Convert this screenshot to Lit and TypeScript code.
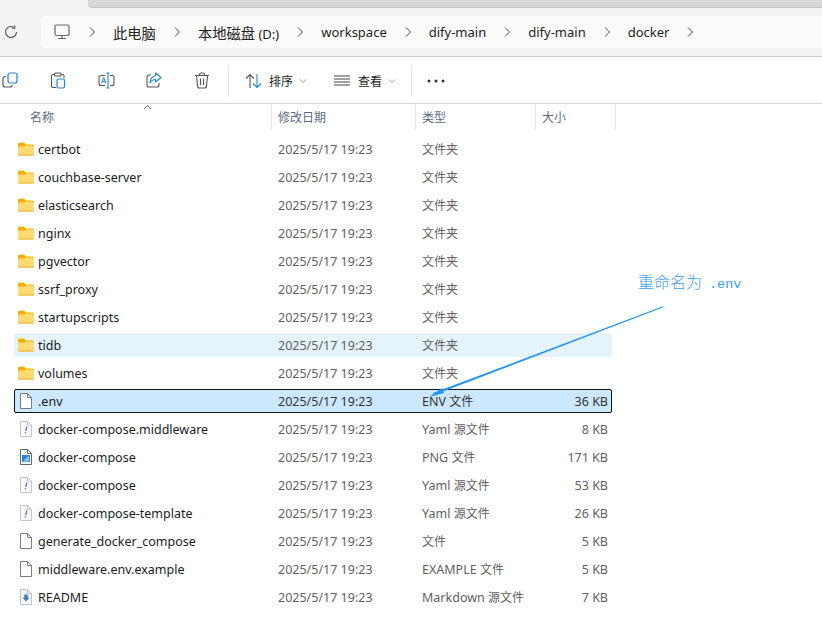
import { LitElement, html, css, svg } from "lit";
import { customElement } from "lit/decorators.js";

type Kind = "folder" | "file" | "yaml" | "png" | "md";
interface Row { name: string; date: string; type: string; size: string; kind: Kind; state?: string; }
const D = "2025/5/17 19:23";
const F = "文件夹";
const rows: Row[] = [
  { name: "certbot", date: D, type: F, size: "", kind: "folder" },
  { name: "couchbase-server", date: D, type: F, size: "", kind: "folder" },
  { name: "elasticsearch", date: D, type: F, size: "", kind: "folder" },
  { name: "nginx", date: D, type: F, size: "", kind: "folder" },
  { name: "pgvector", date: D, type: F, size: "", kind: "folder" },
  { name: "ssrf_proxy", date: D, type: F, size: "", kind: "folder" },
  { name: "startupscripts", date: D, type: F, size: "", kind: "folder" },
  { name: "tidb", date: D, type: F, size: "", kind: "folder", state: "hover" },
  { name: "volumes", date: D, type: F, size: "", kind: "folder" },
  { name: ".env", date: D, type: "ENV 文件", size: "36 KB", kind: "file", state: "sel" },
  { name: "docker-compose.middleware", date: D, type: "Yaml 源文件", size: "8 KB", kind: "yaml" },
  { name: "docker-compose", date: D, type: "PNG 文件", size: "171 KB", kind: "png" },
  { name: "docker-compose", date: D, type: "Yaml 源文件", size: "53 KB", kind: "yaml" },
  { name: "docker-compose-template", date: D, type: "Yaml 源文件", size: "26 KB", kind: "yaml" },
  { name: "generate_docker_compose", date: D, type: "文件", size: "5 KB", kind: "file" },
  { name: "middleware.env.example", date: D, type: "EXAMPLE 文件", size: "5 KB", kind: "file" },
  { name: "README", date: D, type: "Markdown 源文件", size: "7 KB", kind: "md" },
];
const crumbs = ["本地磁盘 (D:)", "workspace", "dify-main", "dify-main", "docker"];

const chevron = html`<svg class="chev" width="16" height="16" viewBox="0 0 16 16"><path d="M6 3.5 L10.5 8 L6 12.5" fill="none" stroke="#444" stroke-width="1"/></svg>`;
const caret = html`<svg class="caret" width="8" height="6" viewBox="0 0 8 6"><path d="M1 1.5 L4 4.5 L7 1.5" fill="none" stroke="#999" stroke-width="1"/></svg>`;

function fileIcon(k: Kind) {
  if (k === "folder") {
    return html`<svg width="16" height="14" viewBox="0 0 16 14">
      <path d="M0 2 Q0 0.5 1.5 0.5 H6 L8 2.5 H14.5 Q16 2.5 16 4 V6 H0 Z" fill="#f0b000"/>
      <path d="M0 4.5 H6.5 L8 3.5 H14.5 Q16 3.5 16 5 V12.5 Q16 13.5 14.5 13.5 H1.5 Q0 13.5 0 12.5 Z" fill="#fedb72"/>
      <path d="M0 12.5 H16 Q16 13.5 14.5 13.5 H1.5 Q0 13.5 0 12.5 Z" fill="#e9ae2c"/>
    </svg>`;
  }
  const stroke = k === "file" ? "#7a7a7a" : k === "png" ? "#5e6a76" : "#c3c3d0";
  const fill = k === "md" ? "#f1f4f8" : k === "yaml" ? "#fafaff" : "#fff";
  const page = svg`<path d="M1.5 0.5 H8.5 L12.5 4.5 V15.5 H1.5 Z" fill="${fill}" stroke="${stroke}"/><path d="M8.5 0.5 V4.5 H12.5" fill="none" stroke="${stroke}"/>`;
  let inner = svg``;
  if (k === "yaml") inner = svg`<path d="M7.8 5.5 L6.8 10" stroke="#9a5fb5" stroke-width="1.4" fill="none"/><rect x="5.8" y="11.2" width="1.4" height="1.4" fill="#9a5fb5"/>`;
  if (k === "png") inner = svg`<rect x="3" y="6" width="8" height="7" fill="#2f7fd8"/><path d="M3.5 12.5 L10 6.5 V12.5 Z" fill="#8cc4f5"/>`;
  if (k === "md") inner = svg`<path d="M5.3 5.5 H8.7 V8.5 H10.5 L7 12.5 L3.5 8.5 H5.3 Z" fill="#3f7fb5"/>`;
  return html`<svg width="14" height="16" viewBox="0 0 14 16">${page}${inner}</svg>`;
}

/* Segoe-like Latin with a slightly smaller CJK run, as in the original */
function mixed(t: string) {
  return t.split(/([\u4e00-\u9fff]+)/).map((p) => (/[\u4e00-\u9fff]/.test(p) ? html`<span class="cjk">${p}</span>` : p));
}

@customElement("app-root")
export class AppRoot extends LitElement {
  static styles = css`
    :host { display: block; width: 822px; height: 639px; background: #fff; overflow: hidden; position: relative;
      font-family: "Noto Sans", "Noto Sans CJK SC", sans-serif; font-size: 12.5px; color: #1b1b1b; }
    .top { height: 56px; background: #f3f3f3; border-bottom: 1px solid #cdcdcd; display: flex; flex-direction: column; }
    .strip { height: 7px; margin-left: 88px; background: #d9d9d9; border-bottom: 1px solid #c4c4c4; border-bottom-left-radius: 4px; flex: none; }
    .navrow { display: flex; align-items: center; margin-top: 8px; }
    .refresh { width: 41px; padding-left: 4px; box-sizing: border-box; display: flex; flex: none; }
    .addr { flex: 1; height: 32px; background: #fbfbfb; border-radius: 4px 0 0 4px; display: flex; align-items: center; padding-left: 13px; }
    .addr .pc { display: flex; margin-right: 14px; }
    .crumb { font-size: 13px; color: #222; margin: 0 13px; white-space: nowrap; }
    .crumb .cjk { font-size: 14.3px; }
    .chev { flex: none; }
    .toolbar { height: 45px; display: flex; align-items: center; border-bottom: 1px solid #d6d6d6; padding-top: 1px; }
    .tool { display: flex; flex: none; width: 48px; justify-content: center; }
    .tools { display: flex; margin-left: -14px; width: 242px; flex: none; }
    .sep { width: 1px; height: 32px; background: #e6e6e6; flex: none; }
    .act { display: flex; align-items: center; font-size: 12px; color: #1b1b1b; flex: none; }
    .act svg.caret { margin-left: 6px; }
    .act.sort { margin-left: 16px; width: 89px; gap: 7px; }
    .act.sort svg.caret { margin-left: -1px; }
    .act.view { width: 77px; gap: 8px; }
    .act.view svg.caret { margin-left: -2px; }
    .more { margin-left: 15px; display: flex; }
    .head { height: 26px; display: grid; grid-template-columns: 272px 144px 120px 80px; width: 616px; position: relative; }
    .head div { border-right: 1px solid #e4e4e4; font-size: 12px; color: #5b6b85; padding-left: 6px; display: flex; align-items: center; box-sizing: border-box; }
    .head div:first-child { padding-left: 30px; }
    .sortup { position: absolute; left: 143px; top: 0; }
    .list { display: flex; flex-direction: column; gap: 4px; padding: 7px 0 0 14px; width: 598px; }
    .row { height: 24px; display: grid; grid-template-columns: 257px 144px 120px 73px; align-items: center; box-sizing: border-box; border-radius: 3px; }
    .row.hover { background: #e5f3fd; }
    .row.sel { background: #cce8ff; outline: 1.5px solid #111; outline-offset: -1.5px; border-radius: 2px; }
    .name { display: flex; align-items: center; color: #1b1b1b; white-space: nowrap; }
    .ico { width: 24px; display: flex; justify-content: center; flex: none; }
    .date, .type, .size { color: #5f5f5f; white-space: nowrap; }
    .date, .type { padding-left: 7px; }
    .cjk { font-size: 12px; }
    .size { text-align: right; }
    .sel .date, .sel .type, .sel .size { color: #333; }
    .note { position: absolute; left: 638px; top: 271px; font-family: "Noto Sans CJK SC", sans-serif; font-size: 16px; color: #3aa0f5; white-space: pre; line-height: 20px; font-weight: 300; }
    .note span { font-family: "Liberation Mono", monospace; font-size: 13.5px; margin-left: 7px; }
    .arrow { position: absolute; left: 420px; top: 300px; }
  `;

  render() {
    return html`
      <div class="top">
        <div class="strip"></div>
        <div class="navrow">
          <div class="refresh">
            <svg width="14" height="14" viewBox="0 0 14 14"><path d="M12.5 7 A5.5 5.5 0 1 1 10 2.4" fill="none" stroke="#555" stroke-width="1.1"/><path d="M10.8 0.5 V3.2 H8" fill="none" stroke="#555" stroke-width="1.1"/></svg>
          </div>
          <div class="addr">
            <span class="pc"><svg width="16" height="16" viewBox="0 0 16 16"><rect x="1" y="1" width="14" height="10.5" rx="1.5" fill="none" stroke="#666" stroke-width="1.2"/><path d="M8 11.5 V14 M4 14.5 H12" stroke="#666" stroke-width="1.2"/></svg></span>
            ${chevron}
            <span class="crumb">${mixed("此电脑")}</span>
            ${crumbs.map((c) => html`${chevron}<span class="crumb">${mixed(c)}</span>`)}
            ${chevron}
          </div>
        </div>
      </div>
      <div class="toolbar">
        <div class="tools">
          <span class="tool"><svg width="16" height="16" viewBox="0 0 16 16"><rect x="6" y="1" width="9" height="10" rx="2" fill="none" stroke="#1a87d8" stroke-width="1.2"/><path d="M4 4.5 H3 A2 2 0 0 0 1 6.5 V13 A2 2 0 0 0 3 15 H8 A2 2 0 0 0 10 13" fill="none" stroke="#555" stroke-width="1.2"/></svg></span>
          <span class="tool"><svg width="16" height="17" viewBox="0 0 16 17"><path d="M5 2.5 H3 A1.5 1.5 0 0 0 1.5 4 V14 A1.5 1.5 0 0 0 3 15.5 H6 M11 2.5 H12.5 A1.5 1.5 0 0 1 14 4 V6" fill="none" stroke="#555" stroke-width="1.1"/><rect x="4.5" y="1" width="6.5" height="3" rx="1" fill="none" stroke="#555" stroke-width="1.1"/><rect x="7" y="7" width="7.5" height="9" rx="1.5" fill="none" stroke="#1a87d8" stroke-width="1.2"/></svg></span>
          <span class="tool"><svg width="17" height="17" viewBox="0 0 17 17"><path d="M7 3.5 H3 A2 2 0 0 0 1 5.5 V11.5 A2 2 0 0 0 3 13.5 H7 M12 3.5 H14 A2 2 0 0 1 16 5.5 V11.5 A2 2 0 0 1 14 13.5 H12" fill="none" stroke="#555" stroke-width="1.1"/><path d="M10 1 V16 M8.5 1 H11.5 M8.5 16 H11.5" stroke="#1a87d8" stroke-width="1.1" fill="none"/><path d="M3.5 11.5 L5.7 5.5 L7.9 11.5 M4.4 9.5 H7" fill="none" stroke="#1a87d8" stroke-width="1"/></svg></span>
          <span class="tool"><svg width="16" height="16" viewBox="0 0 16 16"><path d="M5 3 H3 A2 2 0 0 0 1 5 V13 A2 2 0 0 0 3 15 H11 A2 2 0 0 0 13 13 V11" fill="none" stroke="#555" stroke-width="1.1"/><path d="M9.5 1 L15 5.5 L9.5 10 V7.5 C7 7.5 5.5 8.5 4 11 C4.3 7 6.5 4 9.5 3.7 Z" fill="none" stroke="#1a87d8" stroke-width="1.1" stroke-linejoin="round"/></svg></span>
          <span class="tool"><svg width="16" height="17" viewBox="0 0 16 17"><path d="M1 3.5 H15 M5.5 3.5 V2.5 A1.5 1.5 0 0 1 7 1 H9 A1.5 1.5 0 0 1 10.5 2.5 V3.5 M2.5 3.5 L3.5 14 A2 2 0 0 0 5.5 16 H10.5 A2 2 0 0 0 12.5 14 L13.5 3.5 M6.5 6.5 V13 M9.5 6.5 V13" fill="none" stroke="#555" stroke-width="1.1"/></svg></span>
        </div>
        <span class="sep"></span>
        <div class="act sort">
          <svg width="17" height="16" viewBox="0 0 17 16"><path d="M5 15 V1.5 M1 5.5 L5 1.5 L9 5.5" fill="none" stroke="#555" stroke-width="1.1"/><path d="M12 1 V14.5 M8 10.5 L12 14.5 L16 10.5" fill="none" stroke="#1a87d8" stroke-width="1.1"/></svg>
          <span>排序</span>${caret}
        </div>
        <div class="act view">
          <svg width="16" height="11" viewBox="0 0 16 11"><path d="M0 1 H16 M0 4 H16 M0 7 H16 M0 10 H16" stroke="#444" stroke-width="1"/></svg>
          <span>查看</span>${caret}
        </div>
        <span class="sep"></span>
        <span class="more"><svg width="18" height="4" viewBox="0 0 18 4"><circle cx="2" cy="2" r="1.5" fill="#333"/><circle cx="9" cy="2" r="1.5" fill="#333"/><circle cx="16" cy="2" r="1.5" fill="#333"/></svg></span>
      </div>
      <div class="head">
        <div>名称</div><div>修改日期</div><div>类型</div><div>大小</div>
        <svg class="sortup" width="9" height="6" viewBox="0 0 9 6"><path d="M1 5 L4.5 1.5 L8 5" fill="none" stroke="#666" stroke-width="1"/></svg>
      </div>
      <div class="list">
        ${rows.map((r) => html`
          <div class="row ${r.state ?? ""}">
            <div class="name"><span class="ico">${fileIcon(r.kind)}</span><span>${r.name}</span></div>
            <div class="date">${r.date}</div>
            <div class="type">${mixed(r.type)}</div>
            <div class="size">${r.size}</div>
          </div>`)}
      </div>
      <div class="note">重命名为<span>.env</span></div>
      <svg class="arrow" width="250" height="100" viewBox="0 0 250 100">
        <path d="M243 6.3 L243.4 7.2 L14 95 L13 93 Z" fill="#2196f3"/>
        <path d="M9 97 L22 88 L24 93 Z" fill="#2196f3"/>
      </svg>
    `;
  }
}
